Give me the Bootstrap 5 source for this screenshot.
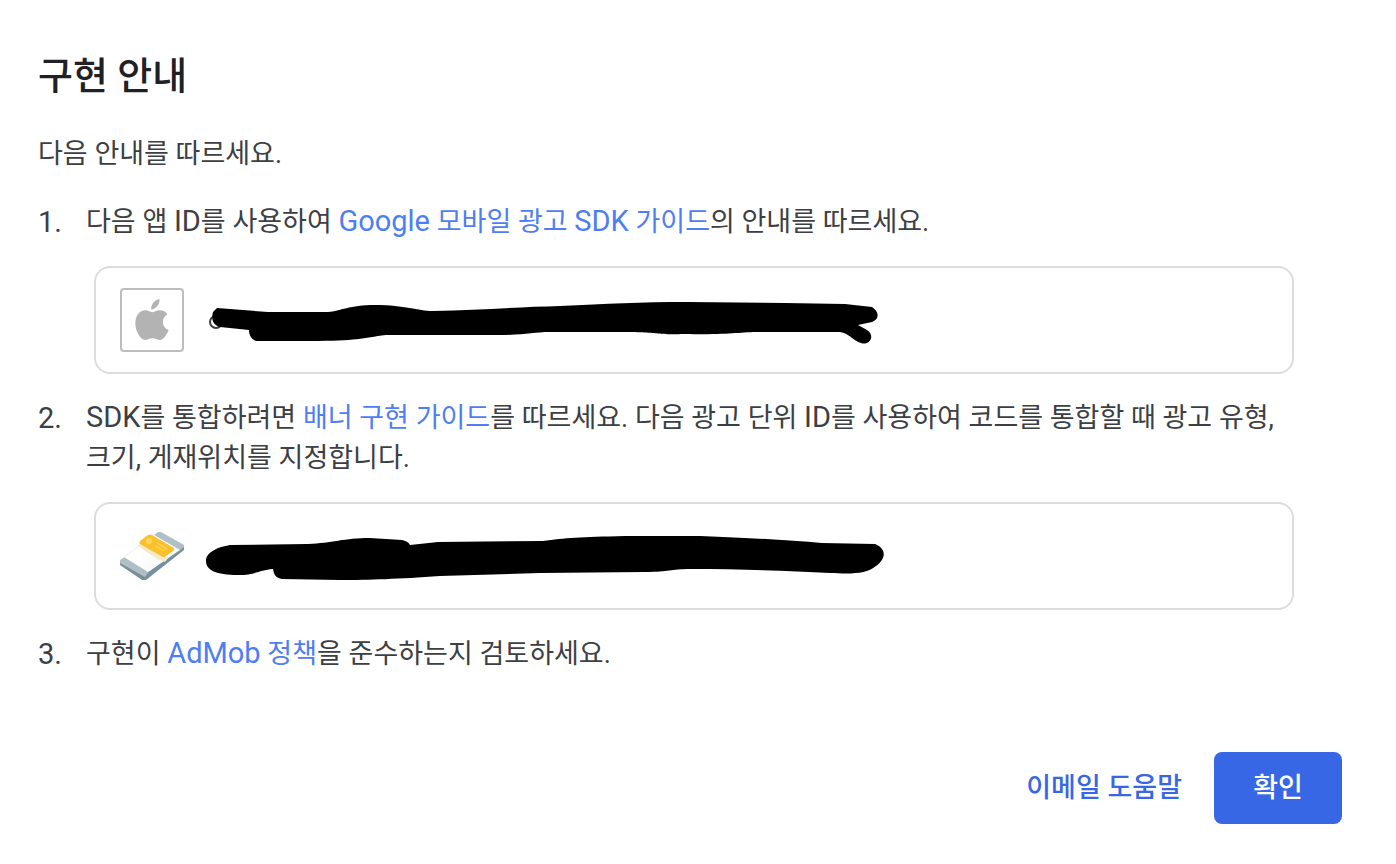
<!DOCTYPE html>
<html lang="ko">
<head>
<meta charset="utf-8">
<meta name="viewport" content="width=device-width, initial-scale=1">
<title>구현 안내</title>
<link href="https://cdn.jsdelivr.net/npm/bootstrap@5.3.0/dist/css/bootstrap.min.css" rel="stylesheet">
<style>
body{font-family:Roboto,"Noto Sans CJK KR",sans-serif;font-size:27px;line-height:40px;color:#3c4043;background:#fff}
.guide{padding:48px 54px 40px 38px}
.guide h1{font-size:38px;line-height:56px;font-weight:500;color:#202124;margin-bottom:30px}
.intro{margin-bottom:28px}
.guide a{color:#4f7df3;text-decoration:none}
.latin,.step-no{font-size:29px}
.latin{line-height:1}
.step-no{width:48px}
.step-text{padding-right:40px}
.id-box{border:2px solid #dadce0;border-radius:16px;margin:24px 48px 24px 56px;padding:20px 24px;gap:20px}
.app-icon{width:64px;height:64px;border:2px solid #bdbdbd;border-radius:4px}
.id-box svg{display:block}
.strike{width:684px;max-width:100%;min-width:0}
.actions{margin-top:78px;gap:32px}
.guide .help{color:#3867e6;font-weight:500}
.ok{background:#3867e6;color:#fff;font-weight:500;line-height:40px;min-width:128px;padding:16px 24px;border:0;border-radius:8px}
</style>
</head>
<body>
<main class="guide">
<h1>구현 안내</h1>
<p class="intro">다음 안내를 따르세요.</p>
<ol class="list-unstyled mb-0">
<li>
<div class="d-flex"><span class="step-no flex-shrink-0">1.</span><p class="step-text mb-0">다음 앱 <span class="latin">ID</span>를 사용하여 <a href="#"><span class="latin">Google</span> 모바일 광고 <span class="latin">SDK</span> 가이드</a>의 안내를 따르세요.</p></div>
<div class="id-box d-flex align-items-center">
<span class="app-icon d-flex align-items-center justify-content-center flex-shrink-0">
<svg width="34" height="42" viewBox="0 0 34 42" fill="#b3b3b3" aria-label="iOS"><path d="M24.500 0c.4 5.500-4 10.600-8.300 10.400C15.800 5.500 20 .5 24.500 0zM17 13.200c2 0 4-2 8-2 3 0 5.800 1.600 7.400 4-6.700 4-5.700 13 1.200 15.800-1.500 4.200-5 10-8.700 10-3 0-4-1.700-7.500-1.700S13 41 10.200 41C5.500 41 .3 32 .3 24.600c0-8 4.400-13.300 10-13.300 3.200 0 5 1.900 6.700 1.900z"/></svg>
</span>
<svg class="strike" height="64" viewBox="204 288 684 64" aria-hidden="true"><circle cx="216" cy="322" r="6" fill="none" stroke="#3c4043" stroke-width="2"/><path d="M217 308L268 312L328 312C341 311 349 305 375 305C406 305 417 311 433 311C479 310 520 307 560 306C607 304 640 302 687 302L785 303L845 304L872 307C880 312 879 320 872 322L858 325L867 330C876 336 869 346 861 343C852 340 849 333 840 332L760 332C738 332 730 335 685 334C648 335 669 332 610 332L550 332C534 332 525 335 500 335L386 335C362 338 357 341 310 341L257 341C252 340 249 336 249 330L220 327C213 325 211 319 213 312Z"/></svg>
</div>
</li>
<li>
<div class="d-flex"><span class="step-no flex-shrink-0">2.</span><p class="step-text mb-0"><span class="latin">SDK</span>를 통합하려면 <a href="#">배너 구현 가이드</a>를 따르세요. 다음 광고 단위 <span class="latin">ID</span>를 사용하여 코드를 통합할 때 광고 유형, 크기, 게재위치를 지정합니다.</p></div>
<div class="id-box d-flex align-items-center">
<svg class="flex-shrink-0" width="64" height="64" viewBox="0 0 64 64" aria-label="배너"><defs><linearGradient id="paper" x1="0" y1="0" x2="1" y2="1"><stop offset=".5" stop-color="#fff"/><stop offset="1" stop-color="#e9eef0"/></linearGradient></defs><path fill="#78909c" d="M0 37L24 51L64 22V26L26 56H22L0 41z"/><path fill="#b0bec5" d="M0 36L5 33L29 47L25 53L0 39zM34 11L38 8H41L64 21V23L59 27z"/><path fill="url(#paper)" d="M4 33L34 11L60 26L28 48z"/><path fill="none" stroke="#eceff1" d="M4 33L34 11"/><path fill="#f5eac9" d="M18 22L20 18L48 34L45 38L37 35z"/><path fill="#fbc02d" d="M20 17L28 11Q30 10 32 11L54 24Q55 26 53 27L46 32Q44 34 41 32L20 20Q19 18 20 17z"/><circle cx="29" cy="17" r="3" fill="#ffd75e"/><path stroke="#ffcf4a" stroke-width="2" d="M37 19l10 6M35 22l9 5"/></svg>
<svg class="strike" height="64" viewBox="204 524 684 64" aria-hidden="true"><path d="M230 545L308 544C332 543 344 538 370 538L402 540C407 541 409 543 410 545L438 542L543 541C565 538 580 537 625 536L700 536C750 538 788 540 822 543L875 544C887 549 886 559 876 566C866 574 853 574 830 573C790 571 743 569 690 569C670 569 670 572 645 572L540 573L440 576C398 579 370 580 340 580L282 579C276 578 274 575 273 569C259 570 256 575 238 575C216 575 206 570 206 561C206 552 218 547 230 545Z"/></svg>
</div>
</li>
<li class="d-flex"><span class="step-no flex-shrink-0">3.</span><p class="step-text mb-0">구현이 <a href="#"><span class="latin">AdMob</span> 정책</a>을 준수하는지 검토하세요.</p></li>
</ol>
<div class="actions d-flex justify-content-end align-items-center"><a class="help" href="#">이메일 도움말</a><button class="ok" type="button">확인</button></div>
</main>
<script src="https://cdn.jsdelivr.net/npm/bootstrap@5.3.0/dist/js/bootstrap.bundle.min.js"></script>
</body>
</html>
